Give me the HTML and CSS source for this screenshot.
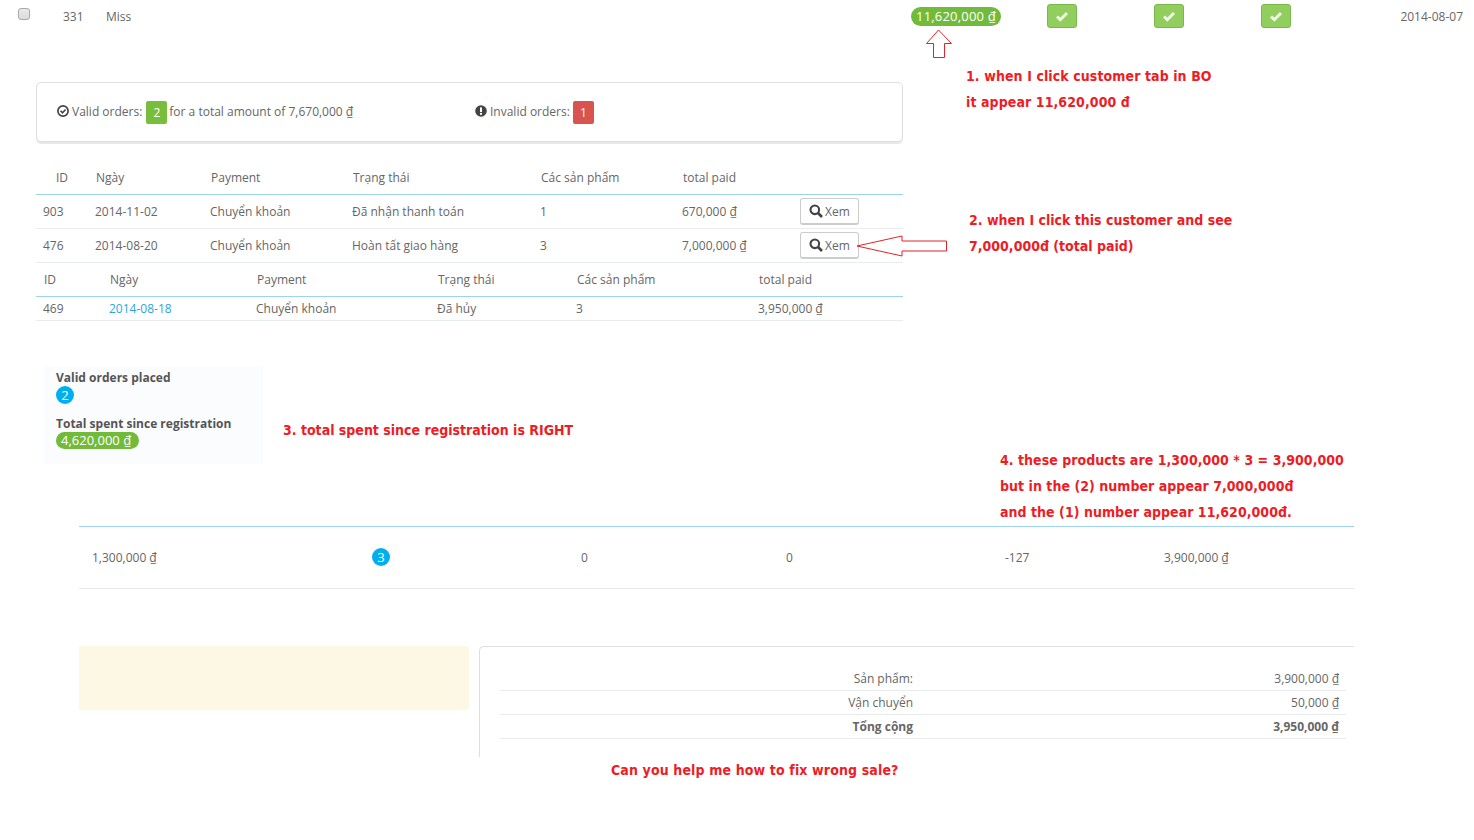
FILE: index.html
```html
<!DOCTYPE html>
<html lang="vi">
<head>
<meta charset="utf-8">
<title>Customer orders</title>
<link rel="stylesheet" href="styles.css">
</head>
<body>
<main class="page">
  <section class="top-row">
    <input class="check" type="checkbox">
    <span>331</span>
    <span>Miss</span>
    <span class="pill pill-top">11,620,000 ₫</span>
    <span class="tick"><svg viewBox="0 0 14 14" width="14" height="14"><path d="M2 7.5l3.3 3.2L12 4" fill="none" stroke="#eef6e6" stroke-width="3"/></svg></span>
    <span class="tick"><svg viewBox="0 0 14 14" width="14" height="14"><path d="M2 7.5l3.3 3.2L12 4" fill="none" stroke="#eef6e6" stroke-width="3"/></svg></span>
    <span class="tick"><svg viewBox="0 0 14 14" width="14" height="14"><path d="M2 7.5l3.3 3.2L12 4" fill="none" stroke="#eef6e6" stroke-width="3"/></svg></span>
    <span class="date">2014-08-07</span>
  </section>

  <section class="summary">
    <div class="summary-valid">
      <svg class="ico" viewBox="0 0 12 12" width="12" height="12"><circle cx="6" cy="6" r="5.1" fill="none" stroke="#444" stroke-width="1.7"/><path d="M3.5 5.8l2 2 3.1-3.3" fill="none" stroke="#444" stroke-width="1.6"/></svg>
      <span class="txt">Valid orders:</span><span class="square green">2</span><span class="txt">for a total amount of 7,670,000 ₫</span>
    </div>
    <div class="summary-invalid">
      <svg class="ico" viewBox="0 0 12 12" width="12" height="12"><circle cx="6" cy="6" r="5.8" fill="#444"/><rect x="5" y="2.4" width="2" height="4.6" fill="#fff"/><rect x="5" y="7.9" width="2" height="1.9" fill="#fff"/></svg>
      <span class="txt">Invalid orders:</span><span class="square red">1</span>
    </div>
  </section>

  <table class="orders orders-a">
    <colgroup><col class="a1"><col class="a2"><col class="a3"><col class="a4"><col class="a5"><col class="a6"><col class="a7"></colgroup>
    <thead><tr><th class="id-head">ID</th><th>Ngày</th><th>Payment</th><th>Trạng thái</th><th>Các sản phẩm</th><th>total paid</th><th></th></tr></thead>
    <tbody>
      <tr><td>903</td><td>2014-11-02</td><td>Chuyển khoản</td><td>Đã nhận thanh toán</td><td>1</td><td>670,000 ₫</td><td><button class="view"><svg viewBox="0 0 14 14" width="14" height="14"><circle cx="5.8" cy="5.8" r="4.3" fill="none" stroke="#444" stroke-width="2.1"/><path d="M9 9l4 4" stroke="#444" stroke-width="2.6"/></svg>Xem</button></td></tr>
      <tr><td>476</td><td>2014-08-20</td><td>Chuyển khoản</td><td>Hoàn tất giao hàng</td><td>3</td><td>7,000,000 ₫</td><td><button class="view"><svg viewBox="0 0 14 14" width="14" height="14"><circle cx="5.8" cy="5.8" r="4.3" fill="none" stroke="#444" stroke-width="2.1"/><path d="M9 9l4 4" stroke="#444" stroke-width="2.6"/></svg>Xem</button></td></tr>
    </tbody>
  </table>

  <table class="orders orders-b">
    <colgroup><col class="b1"><col class="b2"><col class="b3"><col class="b4"><col class="b5"><col class="b6"></colgroup>
    <thead><tr><th>ID</th><th>Ngày</th><th>Payment</th><th>Trạng thái</th><th>Các sản phẩm</th><th>total paid</th></tr></thead>
    <tbody><tr><td>469</td><td><a href="#">2014-08-18</a></td><td>Chuyển khoản</td><td>Đã hủy</td><td>3</td><td>3,950,000 ₫</td></tr></tbody>
  </table>

  <section class="customer">
    <div class="cust-label">Valid orders placed</div>
    <span class="round">2</span>
    <div class="cust-label cust-label-2">Total spent since registration</div>
    <span class="pill pill-cust">4,620,000 ₫</span>
  </section>

  <table class="products">
    <colgroup><col class="p1"><col class="p2"><col class="p3"><col class="p4"><col class="p5"><col class="p6"></colgroup>
    <tbody><tr><td>1,300,000 ₫</td><td><span class="round round-3">3</span></td><td>0</td><td>0</td><td>-127</td><td>3,900,000 ₫</td></tr></tbody>
  </table>

  <section class="bottom">
    <div class="note"></div>
    <div class="totals-panel">
      <table class="totals">
        <tr class="t-first"><td class="t-label">Sản phẩm:</td><td class="t-val">3,900,000 ₫</td></tr>
        <tr><td class="t-label">Vận chuyển</td><td class="t-val">50,000 ₫</td></tr>
        <tr class="t-strong"><td class="t-label">Tổng cộng</td><td class="t-val">3,950,000 ₫</td></tr>
      </table>
    </div>
  </section>
</main>

<svg class="arrow arrow-up" width="28" height="30" viewBox="0 0 28 30"><path d="M13.5 1L1.5 14.5H8.5V28.5H19.5V14.5H26.5Z" fill="#fff" stroke="#e2232a"/></svg>
<svg class="arrow arrow-left" width="94" height="24" viewBox="0 0 94 24"><path d="M1 12L46 2V7H90.5V17H46V22Z" fill="#fff" stroke="#e2232a"/></svg>

<p class="ann a-1">1. when I click customer tab in BO<br>it appear 11,620,000 đ</p>
<p class="ann a-2">2. when I click this customer and see<br>7,000,000đ (total paid)</p>
<p class="ann a-3">3. total spent since registration is RIGHT</p>
<p class="ann a-4">4. these products are 1,300,000 * 3 = 3,900,000<br>but in the (2) number appear 7,000,000đ<br>and the (1) number appear 11,620,000đ.</p>
<p class="ann a-5">Can you help me how to fix wrong sale?</p>
</body>
</html>
```

FILE: styles.css
```css
* { box-sizing: border-box; }
html, body { margin: 0; padding: 0; background: #fff; }
body {
  position: relative;
  width: 1474px;
  height: 840px;
  overflow: hidden;
  font-family: "Open Sans", sans-serif;
  font-size: 12px;
  line-height: 17px;
  color: #666;
}
.page { display: flex; flex-direction: column; align-items: flex-start; }

.top-row {
  display: grid;
  grid-template-columns: 45px 43px 805px 136px 107px 107px 109px 1fr;
  align-items: center;
  width: 1463px;
  height: 33px;
  padding-left: 18px;
}
.check {
  appearance: none;
  width: 12px;
  height: 12px;
  margin: 0 0 5px;
  border: 1px solid #a9a9a9;
  border-radius: 3px;
  background: linear-gradient(#e9e9e9, #dcdcdc);
}
.date { justify-self: end; }
.pill {
  display: inline-block;
  border-radius: 10px;
  background: #72bb3a;
  color: #fff;
  white-space: nowrap;
}
.pill-top { justify-self: start; width: 90px; height: 19px; padding: 0 5px; line-height: 19px; font-size: 13px; letter-spacing: 0.2px; }
.tick {
  display: flex;
  align-items: center;
  justify-content: center;
  justify-self: start;
  width: 30px;
  height: 24px;
  margin-bottom: 1px;
  border: 1px solid #79b94a;
  border-radius: 3px;
  background: #92ce5e;
}

.summary {
  display: flex;
  align-items: center;
  width: 867px;
  height: 60px;
  margin: 49px 0 0 36px;
  padding: 0 0 0 20px;
  border: 1px solid #dedede;
  border-radius: 5px;
  box-shadow: 0 2px 0 #e8e8e8;
}
.summary-valid, .summary-invalid { display: flex; align-items: center; }
.summary-valid { width: 418px; }
.ico { margin: 0 3px 2px 0; }
.txt { margin-bottom: 2px; }
.square {
  display: inline-block;
  width: 21px;
  height: 23px;
  margin: 0 2px 0 4px;
  border-radius: 2px;
  line-height: 23px;
  text-align: center;
  color: #fff;
}
.red { margin-left: 3px; }
.green { background: #78be3c; }
.red { background: #d9534f; }

.orders { table-layout: fixed; width: 867px; margin-left: 36px; border-collapse: collapse; }
.orders th { font-weight: 400; text-align: left; color: #666; padding: 0 8px; border-bottom: 1px solid #9dd3ef; }
.orders td { padding: 0 7px; border-bottom: 1px solid #e9ecef; }
.orders a { color: #2ba6de; text-decoration: none; }
.orders-a { margin-top: 20px; }
.orders-a th { height: 32px; }
.orders-a td { height: 34px; }
.orders-a th.id-head { padding-left: 20px; }
.orders-b th { height: 34px; }
.orders-b td { height: 24px; }
.a1 { width: 52px; } .a2 { width: 115px; } .a3 { width: 142px; } .a4 { width: 188px; }
.a5 { width: 142px; } .a6 { width: 118px; } .a7 { width: 110px; }
.b1 { width: 66px; } .b2 { width: 147px; } .b3 { width: 181px; } .b4 { width: 139px; }
.b5 { width: 182px; } .b6 { width: 152px; }
.view {
  display: flex;
  align-items: center;
  gap: 2px;
  width: 59px;
  height: 27px;
  padding: 1px 0 0 8px;
  border: 1px solid #ccc;
  border-bottom-width: 2px;
  border-radius: 3px;
  background: #fff;
  font: inherit;
  color: #666;
}

.customer {
  width: 219px;
  height: 98px;
  margin: 45px 0 0 44px;
  padding: 3px 12px 0;
  background: #fbfcfe;
}
.cust-label { font-weight: 700; color: #555; line-height: 17px; }
.cust-label-2 { margin-top: 11px; }
.round {
  display: block;
  width: 18px;
  height: 18px;
  margin-top: 0;
  border-radius: 9px;
  background: #00aff0;
  color: #fff;
  font-size: 13px;
  line-height: 18px;
  text-align: center;
}
.pill-cust { display: block; width: 83px; height: 17px; padding-left: 5px; font-size: 13px; line-height: 17px; margin-top: 0; }

.products {
  table-layout: fixed;
  width: 1275px;
  margin: 62px 0 0 79px;
  border-collapse: collapse;
  border-top: 1px solid #9dd3ef;
  border-bottom: 1px solid #e6e9ec;
}
.products td { height: 62px; padding: 0 0 1px 13px; }
.round-3 { margin: 0; }
.p1 { width: 280px; } .p2 { width: 209px; } .p3 { width: 205px; } .p4 { width: 219px; }
.p5 { width: 159px; } .p6 { width: 203px; }

.bottom { display: flex; align-items: flex-start; margin: 57px 0 0 79px; gap: 10px; }
.note { width: 390px; height: 64px; border-radius: 0 3px 3px 0; background: #fdf8e4; }
.totals-panel {
  width: 875px;
  height: 111px;
  padding: 19px 8px 0 20px;
  border: 1px solid #dedede;
  border-width: 1px 0 0 1px;
  border-top-left-radius: 5px;
}
.totals { width: 846px; border-collapse: collapse; }
.totals td { height: 24px; padding: 0; border-bottom: 1px solid #e9ecef; text-align: right; }
.totals .t-first td { padding-top: 2px; }
.t-label { width: 413px; }
.t-val { padding-right: 7px !important; }
.t-strong td { font-weight: 700; }

.arrow { position: absolute; }
.arrow-up { left: 925px; top: 29px; }
.arrow-left { left: 856px; top: 234px; }

.ann {
  position: absolute;
  margin: 0;
  font-family: "DejaVu Sans Condensed", "DejaVu Sans", sans-serif;
  font-weight: 700;
  font-size: 14px;
  color: #ee1c25;
  white-space: nowrap;
  line-height: 26px;
}
.a-1 { left: 966px; top: 63px; letter-spacing: 0.09px; }
.a-2 { left: 969px; top: 207px; }
.a-3 { left: 283px; top: 417px; }
.a-4 { left: 1000px; top: 447px; letter-spacing: 0.04px; }
.a-5 { left: 611px; top: 757px; letter-spacing: 0.13px; }
```
